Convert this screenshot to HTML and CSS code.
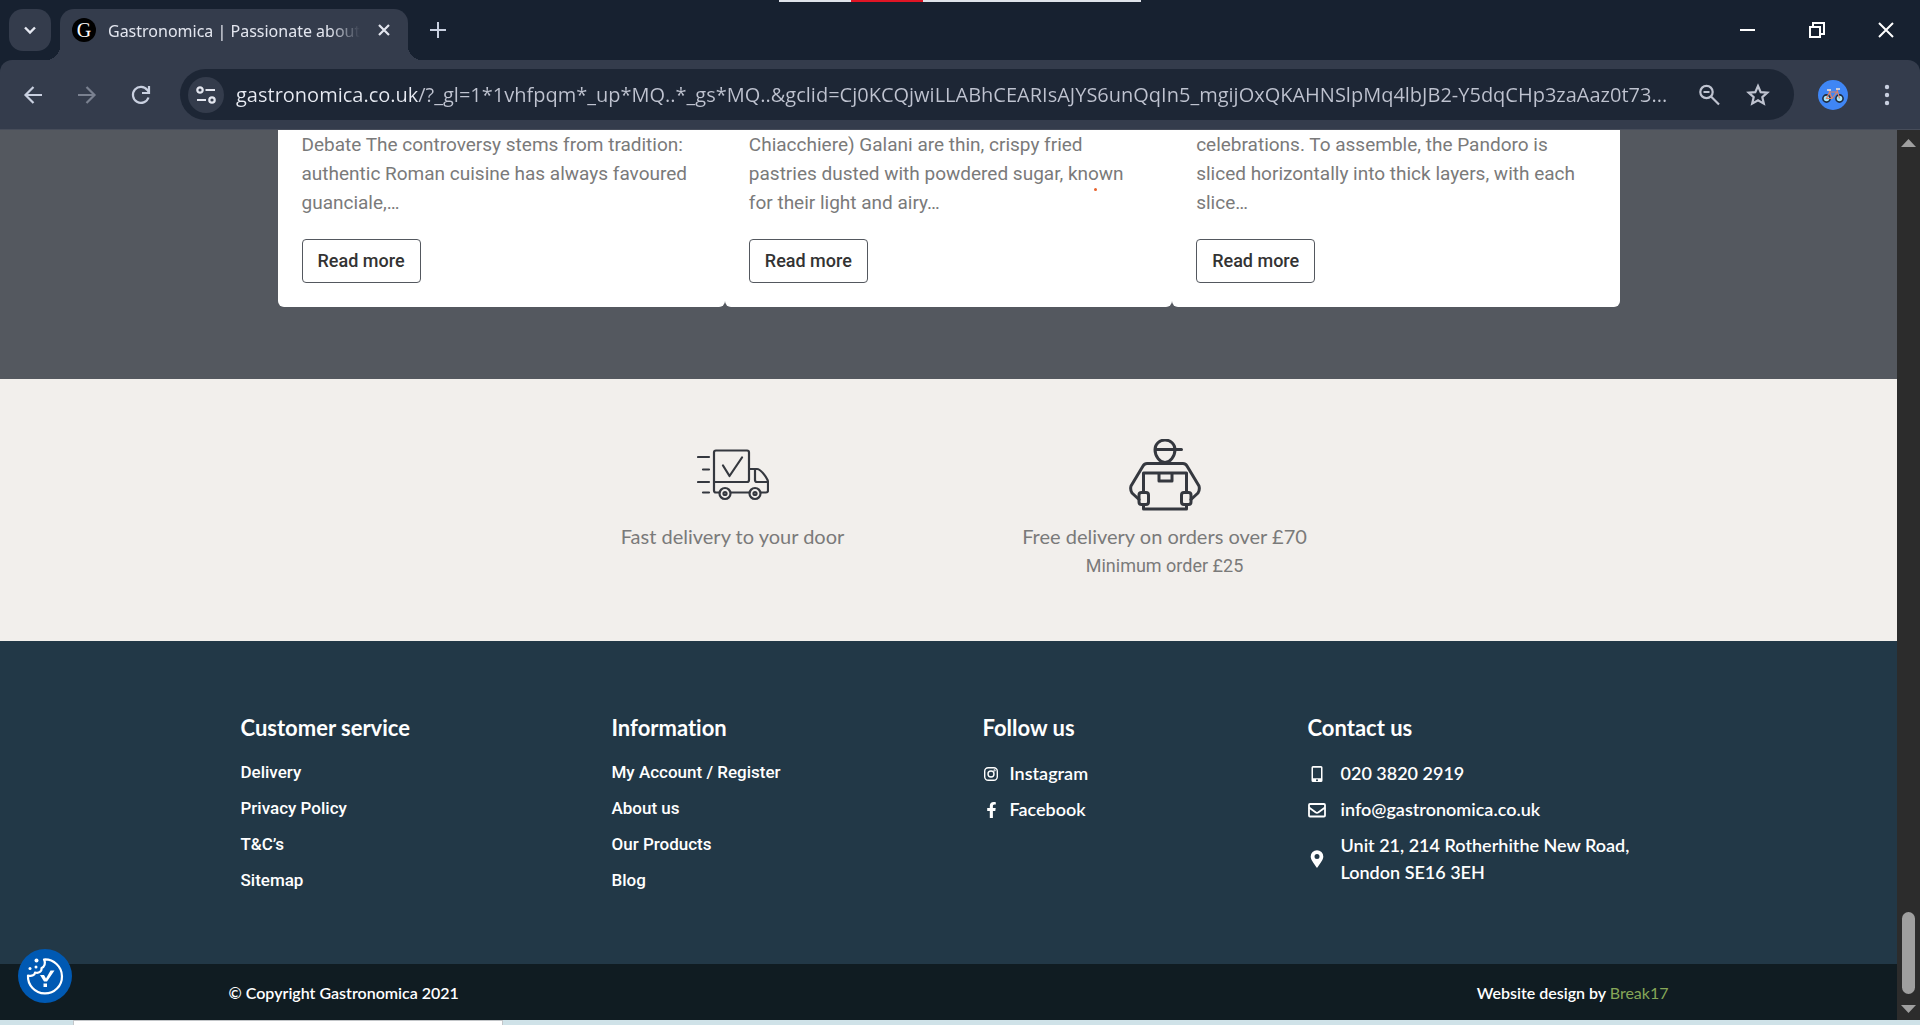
FILE: index.html
```html
<!DOCTYPE html>
<html lang="en">
<head>
<meta charset="utf-8">
<meta name="viewport" content="width=device-width, initial-scale=1">
<title>Gastronomica | Passionate about Italian food</title>
<link rel="stylesheet" href="styles.css">
</head>
<body>
<div class="recorder" aria-hidden="true"><span class="recorder-mark"></span></div>

<header class="browser">
  <div class="tabstrip">
    <button class="tab-search" aria-label="Search tabs">
      <svg width="14" height="14" viewBox="0 0 14 14"><path d="M2 4.500l5 5 5-5" fill="none" stroke="currentColor" stroke-width="2.400"/></svg>
    </button>
    <div class="tab">
      <svg class="favicon" width="24" height="24" viewBox="0 0 24 24" aria-hidden="true"><circle cx="12" cy="12" r="12" fill="#000"/><text x="12" y="19" text-anchor="middle" class="favicon-letter">G</text></svg>
      <span class="tab-title">Gastronomica | Passionate about</span>
      <button class="icon-button tab-close" aria-label="Close tab">
        <svg width="14" height="14" viewBox="0 0 14 14"><path d="M2 2l10 10M12 2L2 12" fill="none" stroke="currentColor" stroke-width="2.200"/></svg>
      </button>
    </div>
    <button class="icon-button tab-new" aria-label="New tab">
      <svg width="16" height="16" viewBox="0 0 16 16"><path d="M8 0v16M0 8h16" fill="none" stroke="currentColor" stroke-width="2"/></svg>
    </button>
    <div class="window-controls">
      <button class="icon-button" aria-label="Minimise"><svg width="16" height="16" viewBox="0 0 16 16"><path d="M0 8h15" stroke="currentColor" stroke-width="2"/></svg></button>
      <button class="icon-button" aria-label="Restore"><svg width="16" height="16" viewBox="0 0 16 16" fill="none" stroke="currentColor" stroke-width="2"><path d="M1 5h10v10H1zM4 5V1h11v11h-4"/></svg></button>
      <button class="icon-button" aria-label="Close"><svg width="16" height="16" viewBox="0 0 16 16"><path d="M1 1l14 14M15 1L1 15" stroke="currentColor" stroke-width="2"/></svg></button>
    </div>
  </div>

  <div class="toolbar">
    <button class="icon-button nav" aria-label="Back"><svg width="20" height="20" viewBox="0 0 20 20" fill="none" stroke="currentColor" stroke-width="2.200"><path d="M19 10H3M10.500 2L2.500 10l8 8"/></svg></button>
    <button class="icon-button nav" aria-label="Forward" disabled><svg width="20" height="20" viewBox="0 0 20 20" fill="none" stroke="currentColor" stroke-width="2.200"><path d="M1 10h16M9.500 2l8 8-8 8"/></svg></button>
    <button class="icon-button nav" aria-label="Reload"><svg width="20" height="20" viewBox="0 0 20 20" fill="none" stroke="currentColor" stroke-width="2.200"><path d="M17.500 12.500A8 8 0 1 1 16.300 5L18 7.500M18 1v7h-7"/></svg></button>
    <div class="omnibox">
      <button class="site-info" aria-label="View site information">
        <svg width="20" height="18" viewBox="0 0 20 18" fill="none" stroke="currentColor" stroke-width="2.200"><circle cx="4" cy="4" r="2.700"/><path d="M9.500 4H19M1 14h9"/><circle cx="16" cy="14" r="2.700"/></svg>
      </button>
      <input class="url" type="text" aria-label="Address" value="gastronomica.co.uk/?_gl=1*1vhfpqm*_up*MQ..*_gs*MQ..&amp;gclid=Cj0KCQjwiLLABhCEARIsAJYS6unQqIn5_mgijOxQKAHNSlpMq4lbJB2-Y5dqCHp3zaAaz0t73...">
      <button class="icon-button" aria-label="Zoom"><svg width="22" height="22" viewBox="0 0 22 22" fill="none" stroke="currentColor" stroke-width="2.200"><circle cx="8.500" cy="8" r="6.200"/><path d="M13 12.500l8 8M5.500 8h6"/></svg></button>
      <button class="icon-button" aria-label="Bookmark this tab"><svg width="24" height="24" viewBox="0 0 24 24" fill="none" stroke="currentColor" stroke-width="2.200"><path d="M12 3l2.700 6.100 6.600.6-5 4.400 1.500 6.500L12 17.200l-5.800 3.400 1.500-6.500-5-4.400 6.600-.6z"/></svg></button>
    </div>
    <button class="avatar" aria-label="Profile">
      <svg width="30" height="30" viewBox="0 0 30 30"><circle cx="15" cy="15" r="15" fill="#3f86f5"/><g fill="#a9e4f5" stroke="#1f2b3d" stroke-width="1.600"><circle cx="8.500" cy="18.500" r="3.600"/><circle cx="21.500" cy="18.500" r="3.600"/></g><path d="M8.500 18.500l3-6.500h7.500l-5 6.500zM19 9.500l2.500 9M11 10l3 8.500" fill="none" stroke="#d9826b" stroke-width="1.200"/><path d="M9 10h4M18 9h4" stroke="#f3e4d8" stroke-width="1.500"/></svg>
    </button>
    <button class="icon-button menu" aria-label="Menu"><svg width="6" height="22" viewBox="0 0 6 22" fill="currentColor"><circle cx="3" cy="3" r="2.200"/><circle cx="3" cy="11" r="2.200"/><circle cx="3" cy="19" r="2.200"/></svg></button>
  </div>
</header>

<div class="viewport">
  <div class="page">
    <main>
      <section class="blog">
        <div class="cards">
          <article class="card">
            <p>Debate The controversy stems from tradition: authentic Roman cuisine has always favoured guanciale,…</p>
            <a class="read-more" href="#">Read more</a>
          </article>
          <article class="card">
            <p>Chiacchiere) Galani are thin, crispy fried pastries dusted with powdered sugar, known for their light and airy…</p>
            <a class="read-more" href="#">Read more</a>
            <span class="speck" aria-hidden="true"></span>
          </article>
          <article class="card">
            <p>celebrations. To assemble, the Pandoro is sliced horizontally into thick layers, with each slice…</p>
            <a class="read-more" href="#">Read more</a>
          </article>
        </div>
      </section>

      <section class="benefits">
        <div class="benefit">
          <svg width="72" height="72" viewBox="0 0 72 72" fill="none" stroke="#35383f" stroke-width="2.200" stroke-linecap="round" stroke-linejoin="round" aria-hidden="true">
            <path d="M1 18h11M6 30.500h6M1 43h11M6 53.500h6"/>
            <path d="M22.500 53.500H19a2 2 0 0 1-2-2V13.500a2 2 0 0 1 2-2h31a2 2 0 0 1 2 2V41a2 2 0 0 1-2 2H17M34 53.500h18.500M64 53.500h5a2 2 0 0 0 2-2V43c0-3-7-13-11-13h-8M70.500 43H60a2 2 0 0 1-2-2V30.500M26 26.500L32.500 37 45 18.500"/>
            <circle cx="28" cy="54.500" r="5.500"/><circle cx="58" cy="54.500" r="5.500"/><circle cx="28" cy="54.500" r="1.500"/><circle cx="58" cy="54.500" r="1.500"/>
          </svg>
          <p class="benefit-title">Fast delivery to your door</p>
        </div>
        <div class="benefit">
          <svg width="72" height="72" viewBox="0 0 72 72" fill="none" stroke="#35383f" stroke-width="3" stroke-linejoin="round" stroke-linecap="round" aria-hidden="true">
            <path d="M26 10.500a10 9.500 0 0 1 20 0c0 7-5 13-10 13s-10-6-10-13zM26 10.500h26.500"/>
            <path d="M10 60.500L3 54q-2-3-1-7L14 27q1.500-2.500 4-2.500h36q2.500 0 4 2.500l12 20q1 4-1 7l-7 6.500"/>
            <path d="M14.500 53V34h43v19M14.500 66v4h43v-4M30 34v8h13v-8"/>
            <rect x="10" y="53.500" width="9.500" height="12" rx="2.500"/><rect x="52.500" y="53.500" width="9.500" height="12" rx="2.500"/>
          </svg>
          <p class="benefit-title">Free delivery on orders over £70</p>
          <p class="benefit-note">Minimum order £25</p>
        </div>
      </section>
    </main>

    <footer>
      <div class="footer-main">
        <div class="footer-grid">
          <section>
            <h2>Customer service</h2>
            <ul class="links">
              <li><a href="#">Delivery</a></li>
              <li><a href="#">Privacy Policy</a></li>
              <li><a href="#">T&amp;C’s</a></li>
              <li><a href="#">Sitemap</a></li>
            </ul>
          </section>
          <section>
            <h2>Information</h2>
            <ul class="links">
              <li><a href="#">My Account / Register</a></li>
              <li><a href="#">About us</a></li>
              <li><a href="#">Our Products</a></li>
              <li><a href="#">Blog</a></li>
            </ul>
          </section>
          <section>
            <h2>Follow us</h2>
            <ul class="links icon-links social">
              <li><a href="#"><svg width="16" height="16" viewBox="0 0 16 16" fill="none" stroke="#fff" stroke-width="1.400" aria-hidden="true"><rect x="1.700" y="1.700" width="12.600" height="12.600" rx="3.500"/><circle cx="8" cy="8" r="3"/><circle cx="11.600" cy="4.400" r=".4"/></svg>Instagram</a></li>
              <li><a href="#"><svg width="16" height="16" viewBox="0 0 16 16" aria-hidden="true"><path d="M12.300 9l.4-2.900H9.900V4.200c0-.8.400-1.600 1.600-1.600h1.300V.2S11.700 0 10.600 0C8.300 0 6.800 1.400 6.800 3.900v2.200H4.200V9h2.600v7h3.100V9z" fill="#fff"/></svg>Facebook</a></li>
            </ul>
          </section>
          <section>
            <h2>Contact us</h2>
            <ul class="links icon-links contact">
              <li><a href="#"><svg width="18" height="18" viewBox="0 0 18 18" aria-hidden="true"><path d="M5 1h8a1.500 1.500 0 0 1 1.500 1.500v13A1.500 1.500 0 0 1 13 17H5a1.500 1.500 0 0 1-1.500-1.500v-13A1.500 1.500 0 0 1 5 1zm0 1.700v10.500h8V2.700zM9 14.200a1 1 0 1 0 0 2 1 1 0 0 0 0-2z" fill="#fff" fill-rule="evenodd"/></svg>020 3820 2919</a></li>
              <li><a href="#"><svg width="18" height="18" viewBox="0 0 18 18" fill="none" stroke="#fff" stroke-width="1.800" stroke-linejoin="round" aria-hidden="true"><rect x="1" y="3" width="16" height="12.500" rx="1"/><path d="M1 6.500l6.500 4.800q1.500 1 3 0L17 6.500"/></svg>info@gastronomica.co.uk</a></li>
              <li><a href="#"><svg width="18" height="18" viewBox="0 0 18 18" aria-hidden="true"><path d="M9 18C5.500 12.800 2.700 10 2.700 6.500a6.300 6.300 0 0 1 12.600 0C15.300 10 12.500 12.800 9 18zM9 4a2.500 2.500 0 1 0 0 5 2.500 2.500 0 0 0 0-5z" fill="#fff" fill-rule="evenodd"/></svg><span>Unit 21, 214 Rotherhithe New Road,<br>London SE16 3EH</span></a></li>
            </ul>
          </section>
        </div>
      </div>
      <div class="footer-bar">
        <div class="footer-bar-inner">
          <p>© Copyright Gastronomica 2021</p>
          <p>Website design by <a href="#">Break17</a></p>
        </div>
      </div>
    </footer>
  </div>

  <div class="scrollbar" aria-hidden="true">
    <svg width="15" height="8" viewBox="0 0 15 8"><path d="M7.500 0L15 8H0z" fill="#9f9f9f"/></svg>
    <span class="thumb"></span>
    <svg width="15" height="8" viewBox="0 0 15 8"><path d="M0 0h15L7.500 8z" fill="#9f9f9f"/></svg>
  </div>

  <button class="consent" aria-label="Cookie preferences">
    <svg width="54" height="54" viewBox="0 0 54 54"><circle cx="27" cy="27" r="27" fill="#0059b3"/><path d="M26 10.500A17 17 0 1 1 10 26.500c4 1 7-.5 7-3 4 1 7-1 6.500-4.500 3-1 4.500-5 2.500-8.500z" fill="none" stroke="#fff" stroke-width="2.200" stroke-linejoin="round"/><g fill="#fff"><circle cx="18.500" cy="11.500" r="2"/><circle cx="18" cy="18" r="1.500"/><circle cx="12" cy="19.500" r="1.500"/><path d="M22 26h4l2 3.500 4.500-8h4L29 32.500h-3zM25.500 34.500h3.500V38h-3.500z"/></g></svg>
  </button>
</div>

<div class="desktop" aria-hidden="true"><span class="desktop-window"></span></div>
</body>
</html>
```
FILE: styles.css
```css
* { box-sizing: border-box; }

body {
  margin: 0;
  min-height: 100vh;
  display: flex;
  flex-direction: column;
  background: #cfe2e8;
  font-family: Roboto, "Liberation Sans", sans-serif;
}

button {
  border: 0;
  padding: 0;
  background: none;
  color: inherit;
  font: inherit;
  display: flex;
  align-items: center;
  justify-content: center;
}

h2, p, ul { margin: 0; padding: 0; }
ul { list-style: none; }
a { color: inherit; text-decoration: none; }
svg { display: block; flex: none; }

/* Browser window */
.recorder {
  position: absolute;
  top: 0;
  left: 50%;
  width: 362px;
  height: 2px;
  margin-left: -181px;
  padding-left: 72px;
  background: #dfe3ea;
}
.recorder-mark { display: block; width: 72px; height: 2px; background: #e01525; }

.browser { background: #172130; color: #c9d0e0; }

.tabstrip {
  display: flex;
  align-items: flex-end;
  height: 60px;
  padding-left: 9px;
}
.tab-search {
  width: 42px;
  height: 42px;
  margin-bottom: 9px;
  border-radius: 14px;
  background: #343c4c;
  color: #e6e9f2;
}
.tab {
  position: relative;
  display: flex;
  align-items: center;
  gap: 12px;
  width: 348px;
  height: 51px;
  margin-left: 9px;
  padding: 0 12px 9px;
  border-radius: 14px 14px 0 0;
  background: #343c4c;
  color: #e3e6ef;
}
/* Flared feet of the active tab */
.tab::before, .tab::after {
  content: "";
  position: absolute;
  bottom: 0;
  width: 14px;
  height: 14px;
}
.tab::before { right: 100%; background: radial-gradient(circle at 0 0, transparent 14px, #343c4c 14px); }
.tab::after { left: 100%; background: radial-gradient(circle at 100% 0, transparent 14px, #343c4c 14px); }
.favicon-letter { font: 20px "Liberation Serif", serif; fill: #fff; }
.tab-title {
  flex: 1;
  overflow: hidden;
  padding-top: 2px;
  white-space: nowrap;
  font: 16px/24px "Noto Sans", sans-serif;
  -webkit-mask-image: linear-gradient(to right, #000 88%, transparent);
  mask-image: linear-gradient(to right, #000 88%, transparent);
}
.tab-close { width: 24px; height: 24px; }
.tab-new { width: 42px; height: 42px; margin: 0 0 9px 9px; }
.window-controls {
  display: flex;
  gap: 22px;
  margin: 0 11px 7px auto;
  color: #fff;
}
.window-controls .icon-button { width: 47px; height: 46px; }

.toolbar {
  display: flex;
  align-items: center;
  height: 70px;
  padding: 0 23px 0 6px;
  border-bottom: 1px solid #474d5a;
  border-radius: 12px 12px 0 0;
  background: #343c4c;
}
.nav { width: 54px; height: 42px; }
.nav:disabled { color: #7a8190; }
.omnibox {
  flex: 1;
  display: flex;
  align-items: center;
  gap: 26px;
  min-width: 0;
  height: 51px;
  margin-left: 12px;
  padding: 0 24px 0 8px;
  border-radius: 26px;
  background: #1d2635;
  color: #bfc3d0;
}
.site-info {
  width: 36px;
  height: 36px;
  margin-right: -14px;
  border-radius: 50%;
  background: #343c4c;
  color: #e3e6ef;
}
/* The host is brighter than the rest of the address */
.url {
  flex: 1;
  min-width: 0;
  border: 0;
  padding: 0;
  background: linear-gradient(to right, #e8ebf3 182px, #bfc3d0 182px);
  -webkit-background-clip: text;
  background-clip: text;
  color: #bfc3d0;
  -webkit-text-fill-color: transparent;
  font: 20px/30px "Open Sans", sans-serif;
}
.avatar { width: 30px; height: 30px; margin-left: 24px; }
.menu { width: 20px; height: 30px; margin-left: 29px; }

/* Web page */
.viewport {
  position: relative;
  flex: 1;
  display: flex;
  background: #101c22;
}
.page { flex: 1; min-width: 0; }

.blog { background: #54585f; padding-bottom: 72px; }
.cards {
  display: grid;
  grid-template-columns: repeat(3, 1fr);
  max-width: 1342px;
  margin: 0 auto;
}
.card {
  position: relative;
  padding: 0 24px 24px;
  border-radius: 0 0 6px 6px;
  background: #fff;
  color: #7a7a7a;
  font-size: 19px;
  line-height: 29px;
}
.speck {
  position: absolute;
  top: 58px;
  left: 369px;
  width: 3px;
  height: 3px;
  border-radius: 50%;
  background: #e8622c;
}
.read-more {
  display: inline-block;
  margin-top: 22px;
  padding: 0 15px;
  border: 1px solid #54585f;
  border-radius: 4px;
  color: #333;
  font-size: 18px;
  font-weight: 500;
  line-height: 42px;
}

.benefits {
  display: flex;
  justify-content: center;
  padding: 60px 0;
  background: #f2efec;
}
.benefit {
  display: flex;
  flex-direction: column;
  align-items: center;
  width: 432px;
  color: #7a7a7a;
  text-align: center;
}
.benefit-title { margin-top: 11px; font: 20px/28px Lato, sans-serif; }
.benefit-note { font-size: 18px; line-height: 31px; }

.footer-main {
  padding: 73px 12px 70px;
  background: #223847;
  color: #fff;
}
.footer-grid {
  display: grid;
  grid-template-columns: 371fr 371fr 325fr 349fr;
  max-width: 1416px;
  margin: 0 auto;
}
.footer-grid h2 {
  margin-bottom: 17px;
  font: 700 22px/28px Lato, sans-serif;
  font-variant-ligatures: none;
}
.links { display: grid; gap: 9px; font-size: 17px; font-weight: 500; line-height: 27px; }
.icon-links { font-family: Lato, sans-serif; font-size: 18px; font-weight: 600; }
.footer-grid .icon-links { margin-top: 18px; }
.links a { display: inline-flex; align-items: center; vertical-align: top; }
.social a { gap: 11px; }
.contact a { gap: 15px; }

.footer-bar {
  padding: 15px 12px 14px;
  background: #101c22;
  color: #fff;
  font: 600 16px/27px Lato, sans-serif;
}
.footer-bar-inner {
  display: flex;
  justify-content: space-between;
  max-width: 1440px;
  margin: 0 auto;
}
.footer-bar a { color: #86a758; font-weight: 400; }

.scrollbar {
  display: flex;
  flex-direction: column;
  align-items: center;
  width: 23px;
  padding: 9px 0 7px;
  background: #2c2c2c;
}
.thumb {
  width: 13px;
  height: 82px;
  margin: auto 0 11px;
  border-radius: 7px;
  background: #9f9f9f;
}

.consent {
  position: absolute;
  left: 18px;
  bottom: 17px;
  width: 54px;
  height: 54px;
  border-radius: 50%;
}

/* Desktop showing below the browser window */
.desktop { display: flex; height: 5px; padding: 0 73px; }
.desktop-window {
  width: 430px;
  border: 1px solid #c3c6c9;
  border-bottom: 0;
  background: #fff;
}
```
